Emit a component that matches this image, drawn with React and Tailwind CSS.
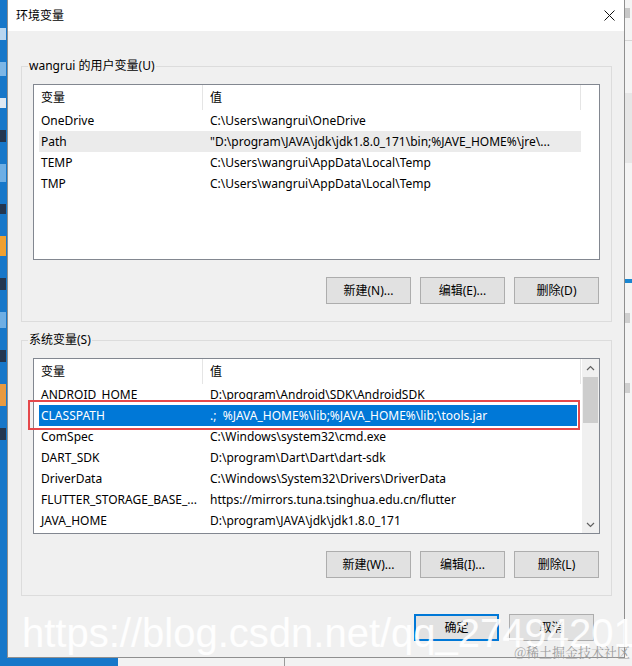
import React from 'react';

const userVars = [
  ['OneDrive', 'C:\\Users\\wangrui\\OneDrive'],
  ['Path', '"D:\\program\\JAVA\\jdk\\jdk1.8.0_171\\bin;%JAVE_HOME%\\jre\\...'],
  ['TEMP', 'C:\\Users\\wangrui\\AppData\\Local\\Temp'],
  ['TMP', 'C:\\Users\\wangrui\\AppData\\Local\\Temp'],
];

const sysVars = [
  ['ANDROID_HOME', 'D:\\program\\Android\\SDK\\AndroidSDK'],
  ['CLASSPATH', '.;  %JAVA_HOME%\\lib;%JAVA_HOME%\\lib;\\tools.jar'],
  ['ComSpec', 'C:\\Windows\\system32\\cmd.exe'],
  ['DART_SDK', 'D:\\program\\Dart\\Dart\\dart-sdk'],
  ['DriverData', 'C:\\Windows\\System32\\Drivers\\DriverData'],
  ['FLUTTER_STORAGE_BASE_...', 'https://mirrors.tuna.tsinghua.edu.cn/flutter'],
  ['JAVA_HOME', 'D:\\program\\JAVA\\jdk\\jdk1.8.0_171'],
];

const Chevron = ({ up }) => (
  <svg width="9" height="6" viewBox="0 0 9 6" className="block">
    <path
      d={up ? 'M1 5 L4.5 1.5 L8 5' : 'M1 1 L4.5 4.5 L8 1'}
      fill="none"
      stroke="#606060"
      strokeWidth="1.2"
    />
  </svg>
);

const VarList = ({ rows, hover, selected, scroll }) => (
  <div className="relative mx-[11px] mt-[10px] flex h-[176px] border border-[#828790] bg-white">
    <div className="flex min-w-0 flex-1 flex-col">
      <div className="flex h-[25px] shrink-0">
        <div className="flex w-[169px] items-center border-r border-[#e5e5e5] pl-[7px]">变量</div>
        <div className="flex w-[378px] items-center border-r border-[#e5e5e5] pl-[7px]">值</div>
      </div>
      {rows.map(([name, value], i) => (
        <div
          key={name}
          className={`ml-[5px] flex h-[21px] shrink-0 items-center whitespace-pre
            ${scroll ? 'mr-[5px]' : 'mr-[18px]'}
            ${i === selected ? 'bg-[#0078d7] text-white' : ''}
            ${i === hover ? 'bg-[#ebebeb]' : ''}`}
        >
          <div className="w-[169px] shrink-0 overflow-hidden pl-[2px]">{name}</div>
          <div className="min-w-0 flex-1 overflow-hidden pl-[2px]">{value}</div>
        </div>
      ))}
    </div>

    {scroll && (
      <div className="flex w-[17px] shrink-0 flex-col bg-[#f0f0f0]">
        <div className="flex h-[17px] items-center justify-center">
          <Chevron up />
        </div>
        <div className="mx-[1px] mt-[1px] h-[46px] bg-[#cdcdcd]" />
        <div className="flex-1" />
        <div className="flex h-[17px] items-center justify-center">
          <Chevron />
        </div>
      </div>
    )}

    {/* red highlight drawn over the CLASSPATH row */}
    {selected !== undefined && (
      <div className="absolute left-[-6px] top-[41px] h-[30px] w-[552px] border-2 border-[#e5484b]" />
    )}
  </div>
);

const ButtonRow = ({ labels }) => (
  <div className="ml-[11px] mr-[12px] mt-[17px] flex justify-end gap-[9px]">
    {labels.map((l) => (
      <div
        key={l}
        className="flex h-[27px] w-[85px] items-center justify-center border border-[#adadad] bg-[#e1e1e1]"
      >
        {l}
      </div>
    ))}
  </div>
);

const Group = ({ title, children }) => (
  <fieldset className="border border-[#dcdcdc] pb-[17px]">
    <legend className="ml-[6px] px-[1px] leading-[16px]">{title}</legend>
    {children}
  </fieldset>
);

// bits of desktop icons peeking out on the left
const DeskBit = ({ h, c }) => <div className={`w-[6px] ${h} ${c}`} />;

export default function App() {
  return (
    <div className="relative flex h-[666px] w-[632px] flex-col overflow-hidden bg-[#1777c9] font-['Noto_Sans','Noto_Sans_CJK_SC',sans-serif] text-[12px] text-black">
      <div className="flex h-[658px] shrink-0">
        {/* desktop edge on the left */}
        <div className="flex w-[7px] shrink-0 flex-col gap-[22px] bg-[#1777c9] pt-[28px]">
          <DeskBit h="h-[12px]" c="bg-[#b8d6f0]" />
          <DeskBit h="h-[14px]" c="bg-[#7db6e6]" />
          <DeskBit h="h-[10px]" c="bg-[#dfe9f3]" />
          <DeskBit h="h-[12px]" c="bg-[#24364f]" />
          <DeskBit h="h-[18px]" c="bg-[#6eaee4]" />
          <DeskBit h="h-[10px]" c="bg-[#24364f]" />
          <DeskBit h="h-[20px]" c="bg-[#f0a030]" />
          <DeskBit h="h-[12px]" c="bg-[#24364f]" />
          <DeskBit h="h-[16px]" c="bg-[#6eaee4]" />
          <DeskBit h="h-[12px]" c="bg-[#24364f]" />
          <DeskBit h="h-[22px]" c="bg-[#e89a40]" />
          <DeskBit h="h-[12px]" c="bg-[#24364f]" />
        </div>

        {/* dialog */}
        <div className="flex w-[618px] shrink-0 flex-col border-x border-b border-[#8f8f8f] bg-[#f0f0f0]">
          <div className="flex h-[31px] shrink-0 items-center justify-between bg-white pl-[8px] pr-[9px]">
            <span>环境变量</span>
            <svg width="11" height="11" viewBox="0 0 11 11">
              <path d="M0.5 0.5 L10.5 10.5 M10.5 0.5 L0.5 10.5" stroke="#111" strokeWidth="1" />
            </svg>
          </div>

          <div className="flex flex-1 flex-col pl-[13px] pr-[12px] pt-[27px]">
            <Group title="wangrui 的用户变量(U)">
              <VarList rows={userVars} hover={1} />
              <ButtonRow labels={['新建(N)...', '编辑(E)...', '删除(D)']} />
            </Group>

            <div className="mt-[10px]">
              <Group title="系统变量(S)">
                <VarList rows={sysVars} selected={1} scroll />
                <ButtonRow labels={['新建(W)...', '编辑(I)...', '删除(L)']} />
              </Group>
            </div>

            <div className="mr-[18px] mt-[18px] flex justify-end gap-[10px]">
              <div className="flex h-[27px] w-[85px] items-center justify-center border-2 border-[#0078d7] bg-[#e1e1e1]">
                确定
              </div>
              <div className="flex h-[27px] w-[85px] items-center justify-center border border-[#adadad] bg-[#e1e1e1]">
                取消
              </div>
            </div>
          </div>
        </div>

        {/* window behind, right edge */}
        <div className="flex flex-1 flex-col bg-[#f4f4f4]">
          <div className="mt-[8px] h-[10px] w-[5px] bg-[#c8c8c8]" />
          <div className="mt-[22px] h-[1px] bg-[#d6d6d6]" />
          <div className="mt-[52px] h-[70px] bg-[#e6e6e6]" />
          <div className="mt-[116px] h-[4px] bg-[#1a86d0]" />
          <div className="mt-[30px] h-[10px] w-[5px] bg-[#cfcfcf]" />
          <div className="mt-[60px] h-[10px] w-[5px] bg-[#cfcfcf]" />
        </div>
      </div>

      {/* strip of the window below */}
      <div className="flex h-[8px] shrink-0">
        <div className="w-[118px] bg-[#1777c9]" />
        <div className="w-[166px] bg-[#f2f2f2]" />
        <div className="flex-1 border-l border-[#9a9a9a] bg-[#f2f2f2]" />
      </div>

      {/* watermarks */}
      <div className="pointer-events-none absolute left-[22px] top-[613px] whitespace-nowrap font-['Liberation_Sans',Arial,sans-serif] text-[40px] leading-none text-white/90">
        https://blog.csdn.net/qq_27494201
      </div>
      <div className="pointer-events-none absolute right-[2px] top-[644px] whitespace-nowrap font-['Noto_Serif_CJK_SC','Noto_Sans_CJK_SC',serif] text-[13px] leading-[16px] text-[#9c9c9c]">
        @稀土掘金技术社区
      </div>
    </div>
  );
}
